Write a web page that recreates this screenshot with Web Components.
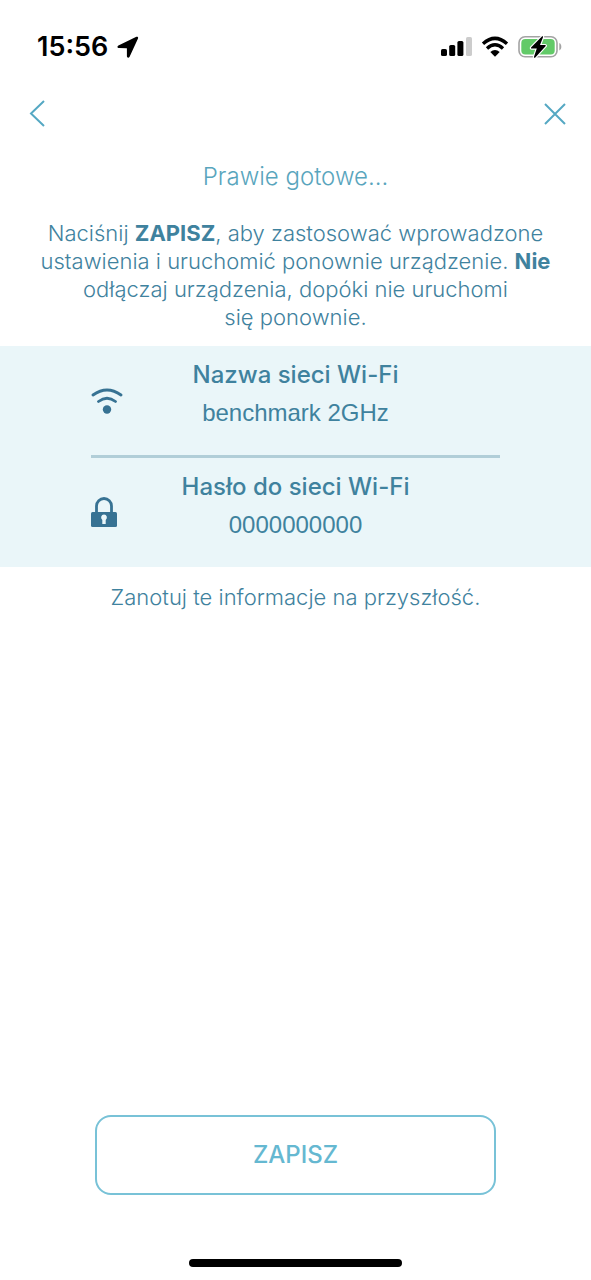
<!DOCTYPE html>
<html lang="pl">
<head>
<meta charset="utf-8">
<meta name="viewport" content="width=device-width, initial-scale=1">
<title>Prawie gotowe</title>
<style>
  body { margin: 0; background: #fff; font-family: Inter, "Liberation Sans", sans-serif; }
  b { font-weight: 700; }
</style>
</head>
<body>
<setup-screen>
  <status-bar slot="top" time="15:56"></status-bar>
  <nav-bar slot="top"></nav-bar>
  <setup-intro>
    <h1 slot="title">Prawie gotowe...</h1>
    <p>Naciśnij <b>ZAPISZ</b>, aby zastosować wprowadzone ustawienia i uruchomić ponownie urządzenie. <b>Nie</b> odłączaj urządzenia, dopóki nie uruchomi się&nbsp;ponownie.</p>
  </setup-intro>
  <network-panel>
    <network-row icon="wifi"><span slot="label">Nazwa sieci Wi-Fi</span>benchmark 2GHz</network-row>
    <network-row icon="lock"><span slot="label">Hasło do sieci Wi-Fi</span>0000000000</network-row>
  </network-panel>
  <setup-note>Zanotuj te informacje na przyszłość.</setup-note>
  <save-button slot="bottom">ZAPISZ</save-button>
  <home-indicator slot="bottom"></home-indicator>
</setup-screen>

<script>
  const define = (name, html, setup) => customElements.define(name, class extends HTMLElement {
    constructor() {
      super();
      this.attachShadow({ mode: "open" }).innerHTML = html;
    }
    connectedCallback() {
      if (setup) setup(this, this.shadowRoot);
    }
  });

  define("setup-screen", `
    <style>
      :host { display: flex; flex-direction: column; min-height: 100vh; color: #3f829e; }
      main { flex: 1; }
    </style>
    <header><slot name="top"></slot></header>
    <main><slot></slot></main>
    <footer><slot name="bottom"></slot></footer>`);

  define("status-bar", `
    <style>
      :host { display: flex; justify-content: space-between; align-items: center; height: 46px; padding: 24px 29px 12px 37px; color: #000; }
      div { display: flex; align-items: center; gap: 9px; }
      div:first-child { gap: 7px; }
      time { font-size: 27px; font-weight: 600; line-height: 32px; }
      svg { display: block; }
    </style>
    <div>
      <time></time>
      <svg width="22" height="22" viewBox="0 0 22 22" aria-hidden="true"><path d="M19.400.8 1.400 9.400c-1.500.8-1.200 2.700.6 2.700l7.400.1c.4 0 .5.1.5.5v7.400c0 1.800 1.900 2.200 2.700.6L21 2.400c.5-1.200-.5-2.100-1.600-1.600z" fill="#000"/></svg>
    </div>
    <div>
      <svg width="31" height="22" viewBox="0 0 31 22" aria-hidden="true">
        <rect x="0" y="13" width="6" height="7" rx="1.600"/><rect x="8.200" y="9" width="6" height="11" rx="1.600"/><rect x="16.400" y="5" width="6" height="15" rx="1.600"/><rect x="25" y="1" width="6" height="19" rx="1.600" fill="#ccc"/>
      </svg>
      <svg width="28" height="22" viewBox="0 0 28 22" aria-hidden="true">
        <path d="M2 7.800Q14-3 26 7.800M6 12.400Q14 5.300 22 12.400" fill="none" stroke="#000" stroke-width="3.400"/>
        <path d="M9.300 16Q14 12 18.700 16L14 20.700z"/>
      </svg>
      <svg width="44" height="24" viewBox="0 0 44 24" aria-hidden="true">
        <rect x="1" y="1.800" width="38" height="20" rx="6" fill="#fff" stroke="#a3a3a3" stroke-width="1.600"/>
        <rect x="3.300" y="4" width="33.400" height="15.600" rx="4" fill="#62ca68"/>
        <path d="M41.300 8v7.400c2.700-1 2.700-6.400 0-7.400z" fill="#a3a3a3"/>
        <path d="M23.900 1.500 13.300 12.300c-.6.700-.3 1.300.5 1.300h5l-2.800 8.200c-.3.900.7 1.300 1.300.6L27.500 11.300c.5-.6.200-1.200-.5-1.200h-5l3-7.800c.3-.8-.5-1.400-1.100-.8z" stroke="#fff" stroke-width="2.400" paint-order="stroke"/>
      </svg>
    </div>`, (el, root) => { root.querySelector("time").textContent = el.getAttribute("time"); });

  define("nav-bar", `
    <style>
      :host { display: flex; justify-content: space-between; padding: 8px 20px 0 22px; }
      button { width: 32px; height: 48px; padding: 0; border: 0; background: none; display: grid; place-items: center; cursor: pointer; }
      svg { fill: none; stroke: #55a8c3; stroke-width: 2; }
    </style>
    <button type="button" aria-label="Wstecz"><svg width="28" height="28" viewBox="0 0 28 28"><path d="M20 1 7 13.500l13 12.500"/></svg></button>
    <button type="button" aria-label="Zamknij"><svg width="24" height="24" viewBox="0 0 24 24"><path d="M2 2l20 20M22 2 2 22"/></svg></button>`);

  define("setup-intro", `
    <style>
      :host { display: block; padding: 23px 32px 15px; text-align: center; }
      ::slotted(h1) { margin: 0 0 26px; color: #59a5bd; font-size: 24px; font-weight: 300; line-height: 32px; }
      ::slotted(p) { margin: 0; font-size: 22px; font-weight: 300; line-height: 28px; }
    </style>
    <slot name="title"></slot>
    <slot></slot>`);

  define("network-panel", `
    <style>
      :host { display: block; background: #eaf6f9; padding: 0 91px; }
    </style>
    <slot></slot>`);

  define("network-row", `
    <style>
      :host { display: grid; grid-template-columns: 32px 1fr 32px; align-items: center; height: 109px; }
      :host(:not(:last-of-type)) { border-bottom: 3px solid #b1ced8; }
      dl { margin: 0; padding-bottom: 14px; text-align: center; white-space: nowrap; display: grid; justify-content: center; }
      dt { font-size: 24px; font-weight: 500; line-height: 38px; }
      dd { margin: 0; font-family: "Liberation Sans", sans-serif; font-size: 24px; font-weight: 400; line-height: 38px; }
      svg { display: none; color: #377293; }
      :host([icon="wifi"]) .wifi, :host([icon="lock"]) .lock { display: block; }
    </style>
    <svg class="wifi" width="32" height="28" viewBox="0 0 32 28" aria-hidden="true">
      <path d="M2 8Q16-2 30 8M7.500 14.500Q16 8 24.500 14.500" fill="none" stroke="currentColor" stroke-width="2.800" stroke-linecap="round"/>
      <circle cx="16" cy="22.500" r="4.200" fill="currentColor"/>
    </svg>
    <svg class="lock" width="26" height="32" viewBox="0 0 26 32" aria-hidden="true">
      <path d="M5.500 17V9a7.500 7.500 0 0 1 15 0V17" fill="none" stroke="currentColor" stroke-width="2.800"/>
      <rect x="0" y="15" width="26" height="15" rx="1.500" fill="currentColor"/>
      <path d="M13 17.500a3 3 0 0 0-1.700 5.400V27h3.400v-4.100A3 3 0 0 0 13 17.500z" fill="#eaf6f9"/>
    </svg>
    <dl><dt><slot name="label"></slot></dt><dd><slot></slot></dd></dl>`);

  define("setup-note", `
    <style>
      :host { display: block; padding: 16px 32px; text-align: center; font-size: 22px; font-weight: 300; line-height: 28px; }
    </style>
    <slot></slot>`);

  define("save-button", `
    <style>
      :host { display: block; padding: 0 95px; }
      button { display: block; width: 100%; height: 80px; border: 2px solid #78c2d7; border-radius: 16px; background: #fff; color: #65b8d1; font: 500 24px/28px Inter, "Liberation Sans", sans-serif; cursor: pointer; }
    </style>
    <button type="button"><slot></slot></button>`);

  define("home-indicator", `
    <style>
      :host { display: flex; justify-content: center; padding: 64px 0 13px; }
      span { width: 36%; height: 8px; border-radius: 4px; background: #000; }
    </style>
    <span></span>`);
</script>
</body>
</html>
